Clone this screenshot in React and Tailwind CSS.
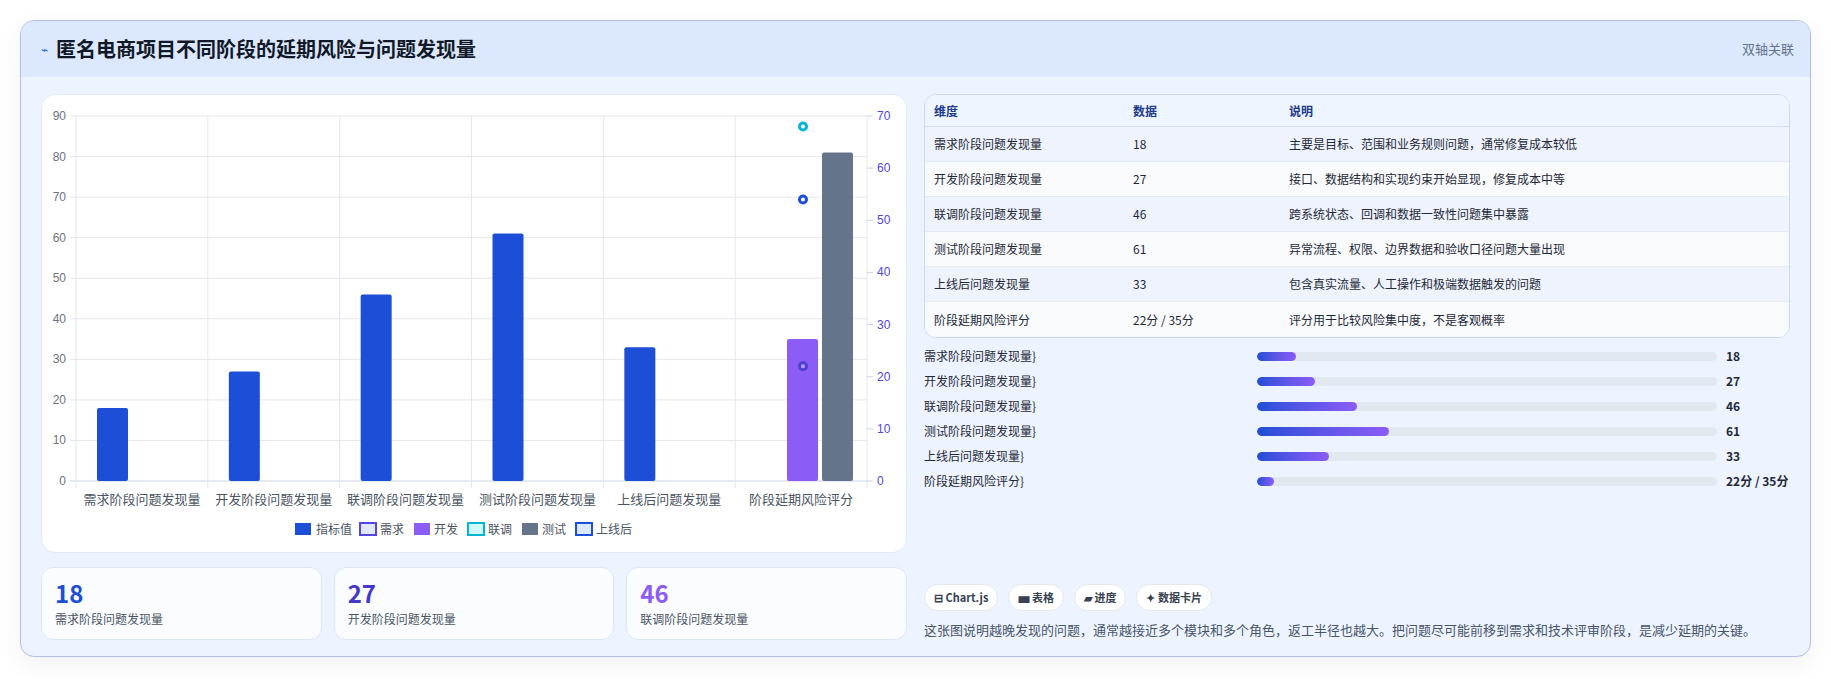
import React from "react";

const cats = ["需求阶段问题发现量","开发阶段问题发现量","联调阶段问题发现量","测试阶段问题发现量","上线后问题发现量","阶段延期风险评分"];
const vals = [18,27,46,61,33];
const rows = [
  ["需求阶段问题发现量","18","主要是目标、范围和业务规则问题，通常修复成本较低"],
  ["开发阶段问题发现量","27","接口、数据结构和实现约束开始显现，修复成本中等"],
  ["联调阶段问题发现量","46","跨系统状态、回调和数据一致性问题集中暴露"],
  ["测试阶段问题发现量","61","异常流程、权限、边界数据和验收口径问题大量出现"],
  ["上线后问题发现量","33","包含真实流量、人工操作和极端数据触发的问题"],
  ["阶段延期风险评分","22分 / 35分","评分用于比较风险集中度，不是客观概率"],
];
const bars = [["需求阶段问题发现量","18",8.5],["开发阶段问题发现量","27",12.7],["联调阶段问题发现量","46",21.7],["测试阶段问题发现量","61",28.8],["上线后问题发现量","33",15.6],["阶段延期风险评分","22分 / 35分",3.6]];

function Chart() {
  const x0 = 34, x1 = 825, y0 = 21, y1 = 386;
  const cw = (x1 - x0) / 6;
  const yl = v => y1 - (v / 90) * (y1 - y0);
  const yr = v => y1 - (v / 70) * (y1 - y0);
  return (
    <svg width="866" height="459" viewBox="0 0 866 459" style={{fontFamily:"'Liberation Sans','Noto Sans CJK SC',sans-serif"}}>
      {Array.from({length:10}).map((_,i)=>(
        <g key={i}>
          <line x1={x0-6} x2={x1} y1={yl(i*10)} y2={yl(i*10)} stroke={i===0?"#cbd5e1":"#e5e7eb"} />
          <text x={x0-10} y={yl(i*10)+4} textAnchor="end" fontSize="12" fill="#6b7280">{i*10}</text>
        </g>
      ))}
      {Array.from({length:7}).map((_,i)=>(
        <line key={i} x1={x0+i*cw} x2={x0+i*cw} y1={y0} y2={y1+7} stroke="#e5e7eb" />
      ))}
      {Array.from({length:8}).map((_,i)=>(
        <g key={i}>
          <line x1={x1} x2={x1+6} y1={yr(i*10)} y2={yr(i*10)} stroke="#cbd5e1" />
          <text x={x1+10} y={yr(i*10)+4} fontSize="12" fill="#4f46e5">{i*10}</text>
        </g>
      ))}
      {vals.map((v,i)=>(
        <rect key={i} x={x0+i*cw+21} y={yl(v)} width="31" height={y1-yl(v)} rx="2" fill="#1d4ed8" />
      ))}
      <rect x={745} y={yl(35)} width="31" height={y1-yl(35)} rx="2" fill="#8b5cf6" />
      <rect x={780} y={yl(81)} width="31" height={y1-yl(81)} rx="2" fill="#64748b" />
      <circle cx={761} cy={yr(68)} r="3.5" fill="#fff" stroke="#06b6d4" strokeWidth="3" />
      <circle cx={761} cy={yr(54)} r="3.5" fill="#fff" stroke="#1d4ed8" strokeWidth="3" />
      <circle cx={761} cy={yr(22)} r="3.5" fill="#c4b5fd" stroke="#4338ca" strokeWidth="3" opacity="0.8" />
      {cats.map((c,i)=>(
        <text key={i} x={x0+i*cw+cw/2} y={409} textAnchor="middle" fontSize="13" fill="#4b5563">{c}</text>
      ))}
      <g fontSize="12" fill="#4b5563">
        <rect x="253" y="428" width="16" height="12" fill="#1d4ed8" /><text x="274" y="439">指标值</text>
        <rect x="318" y="428" width="16" height="12" fill="#e0e7ff" stroke="#4f46e5" strokeWidth="2" /><text x="338" y="439">需求</text>
        <rect x="372" y="428" width="16" height="12" fill="#8b5cf6" /><text x="392" y="439">开发</text>
        <rect x="426" y="428" width="16" height="12" fill="#cffafe" stroke="#06b6d4" strokeWidth="2" /><text x="446" y="439">联调</text>
        <rect x="480" y="428" width="16" height="12" fill="#64748b" /><text x="500" y="439">测试</text>
        <rect x="534" y="428" width="16" height="12" fill="#dbeafe" stroke="#1d4ed8" strokeWidth="2" /><text x="554" y="439">上线后</text>
      </g>
    </svg>
  );
}

export default function App() {
  return (
    <div className="w-[1831px] h-[679px] bg-white p-[20px] pb-0" style={{fontFamily:"'Noto Sans CJK SC','Noto Sans',sans-serif"}}>
      <div className="w-[1791px] h-[637px] rounded-[14px] border border-[#b4bfe8] bg-[#eef4ff] overflow-hidden shadow-[0_8px_24px_rgba(0,0,0,0.06)]">
        <div className="h-[56px] bg-[#dce8fd] flex items-center justify-between px-[20px]">
          <div className="flex items-center gap-[8px]">
            <span className="text-[#2563eb] text-[12px]">⌁</span>
            <span className="text-[20px] font-bold text-[#111827]">匿名电商项目不同阶段的延期风险与问题发现量</span>
          </div>
          <span className="text-[13px] text-[#64748b] mr-[-4px]">双轴关联</span>
        </div>
        <div className="flex gap-[17px] px-[20px] pt-[17px]">
          <div className="w-[866px] flex flex-col gap-[14px]">
            <div className="h-[459px] bg-white rounded-[14px] border border-[#e3e9f5]"><Chart /></div>
            <div className="grid grid-cols-3 gap-[12px]">
              {[["18","text-[#1d4ed8]","需求阶段问题发现量"],["27","text-[#4338ca]","开发阶段问题发现量"],["46","text-[#8b5cf6]","联调阶段问题发现量"]].map(([n,c,l])=>(
                <div key={n} className="h-[73px] rounded-[12px] border border-[#dde6f7] bg-[#fafcff] px-[13px] pt-[10px]">
                  <div className={`text-[24px] leading-[30px] font-bold ${c}`}>{n}</div>
                  <div className="text-[12px] text-[#4b5563] mt-[2px]">{l}</div>
                </div>
              ))}
            </div>
          </div>
          <div className="w-[866px] flex flex-col">
            <div className="rounded-[12px] border border-[#cfd8ea] overflow-hidden bg-white text-[12px]">
              <div className="flex h-[32px] items-center bg-[#eff5ff] border-b border-[#d6deee] font-bold text-[#1e3a8a]">
                <div className="w-[208px] pl-[9px]">维度</div><div className="w-[156px]">数据</div><div>说明</div>
              </div>
              {rows.map((r,i)=>(
                <div key={i} className={`flex h-[35px] items-center text-[#1f2937] border-b border-[#e5eaf3] last:border-b-0 ${i%2===0?"bg-[#eef3fd]":"bg-[#f8fafc]"}`}>
                  <div className="w-[208px] pl-[9px]">{r[0]}</div><div className="w-[156px]">{r[1]}</div><div>{r[2]}</div>
                </div>
              ))}
            </div>
            <div className="flex flex-col gap-[7px] mt-[9px]">
              {bars.map(([l,v,p])=>(
                <div key={l} className="flex items-center h-[18px] text-[12px] text-[#1f2937]">
                  <div className="w-[333px]">{l}}</div>
                  <div className="w-[460px] h-[9px] rounded-full bg-[#e2e8f0] overflow-hidden">
                    <div className="h-full rounded-full bg-gradient-to-r from-[#1d4ed8] to-[#8b5cf6]" style={{width:`${p}%`}} />
                  </div>
                  <div className="ml-[9px] font-bold">{v}</div>
                </div>
              ))}
            </div>
            <div className="flex gap-[10px] mt-[94px]">
              {["⊟ Chart.js","▅ 表格","▰ 进度","✦ 数据卡片"].map(t=>(
                <span key={t} className="h-[27px] px-[9px] flex items-center rounded-full bg-white border border-[#e5e7eb] text-[11px] font-bold text-[#374151]">{t}</span>
              ))}
            </div>
            <div className="mt-[9px] text-[13px] text-[#475569]">这张图说明越晚发现的问题，通常越接近多个模块和多个角色，返工半径也越大。把问题尽可能前移到需求和技术评审阶段，是减少延期的关键。</div>
          </div>
        </div>
      </div>
    </div>
  );
}
